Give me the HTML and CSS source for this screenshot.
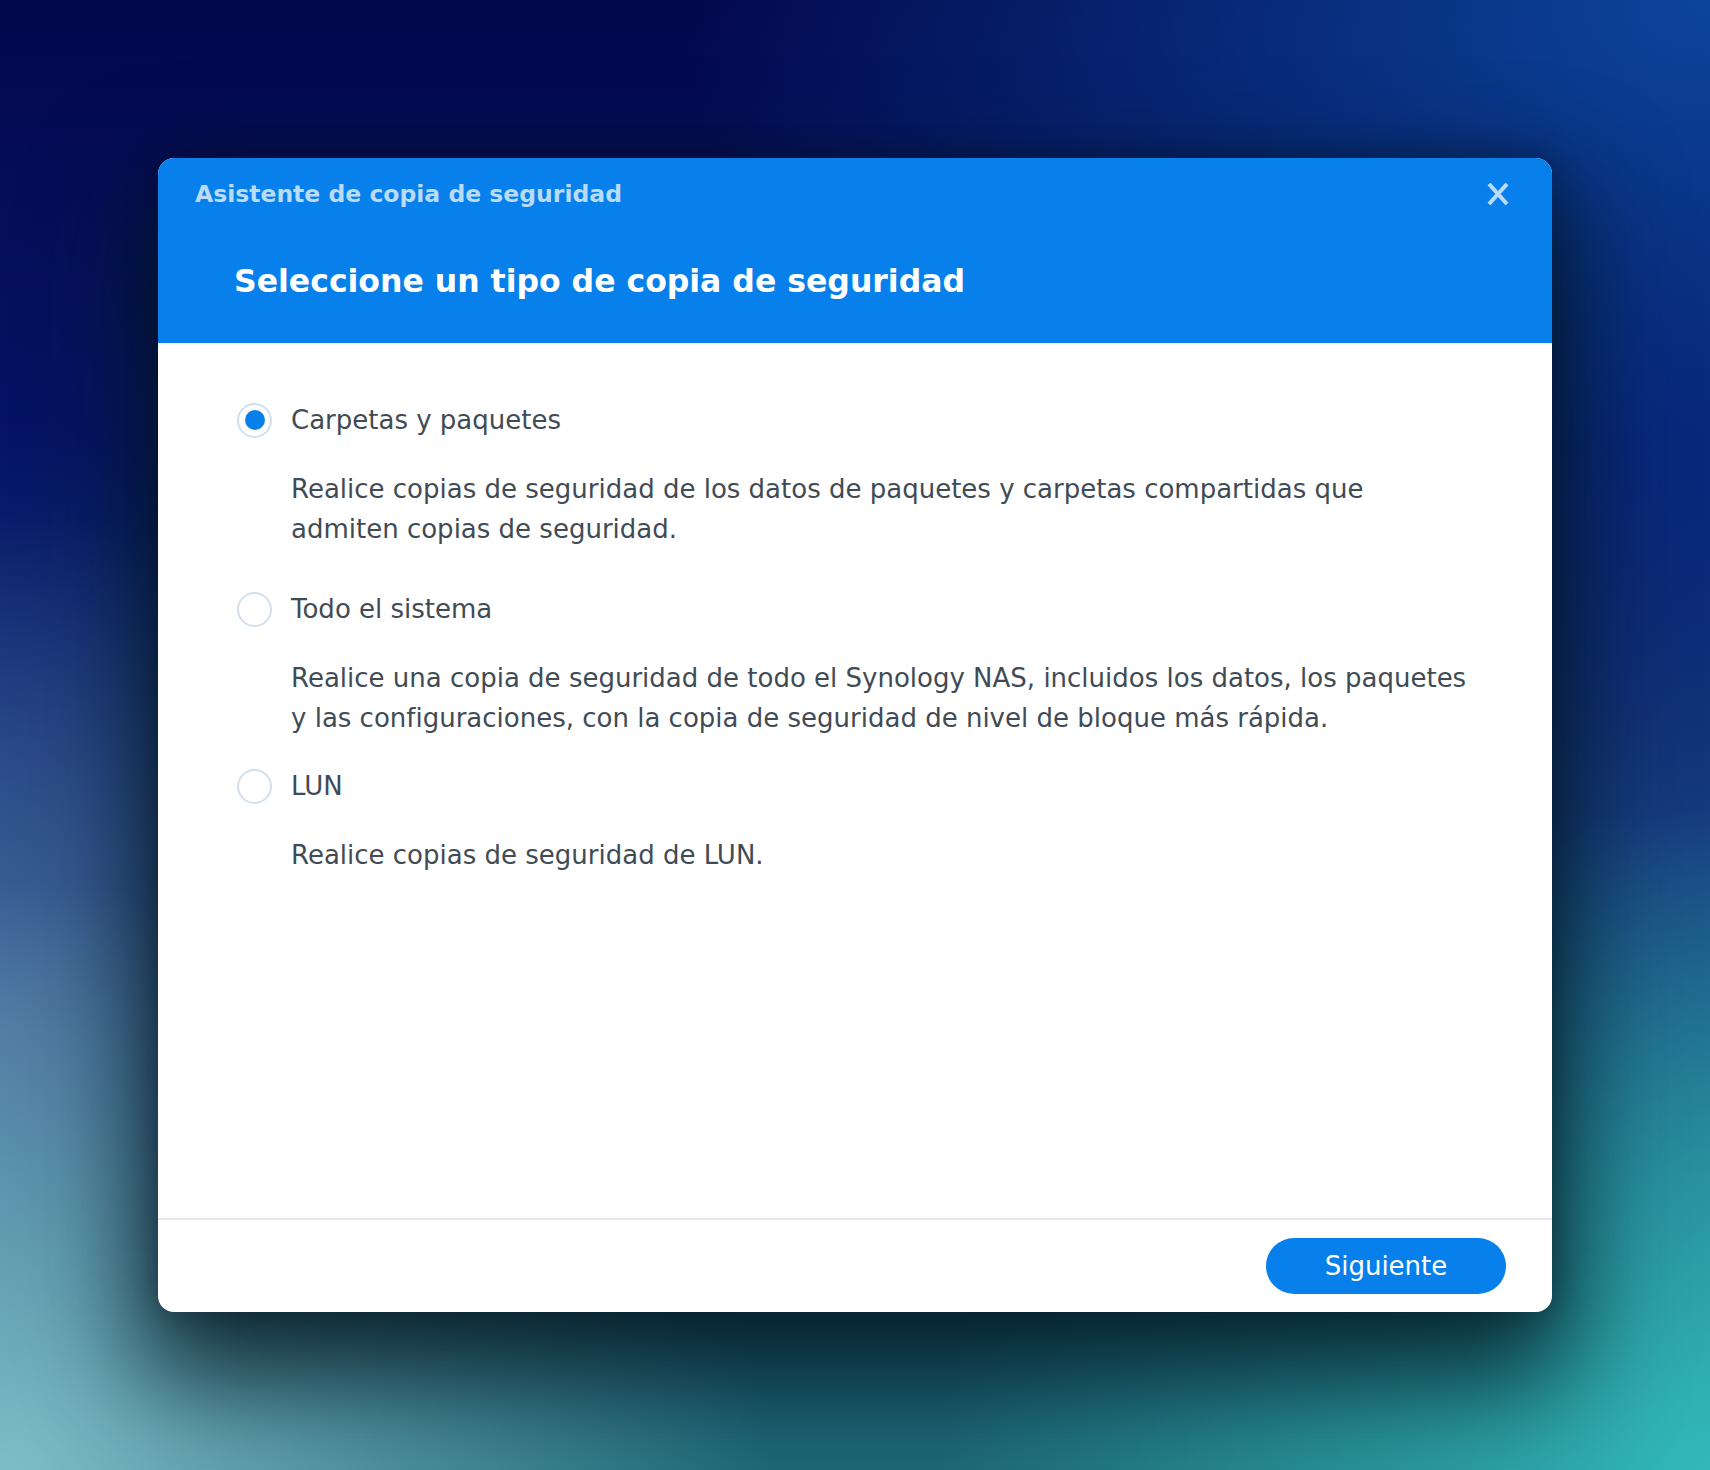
FILE: index.html
```html
<!DOCTYPE html>
<html lang="es">
<head>
  <meta charset="UTF-8" />
  <meta name="viewport" content="width=device-width, initial-scale=1.0"/>
  <title>Asistente de copia de seguridad</title>
  <link rel="stylesheet" href="styles.css">
</head>
<body>
  <div class="dialog">
    <!-- Header with wizard name and step title -->
    <div class="dialog-header">
      <div class="header-top">
        <span class="wizard-name">Asistente de copia de seguridad</span>
        <button class="close-btn" aria-label="Cerrar">
          <svg width="22" height="22" viewBox="0 0 22 22">
            <path d="M2 1 L20 21 M20 1 L2 21" stroke="currentColor" stroke-width="4" fill="none"/>
          </svg>
        </button>
      </div>
      <h1 class="step-title">Seleccione un tipo de copia de seguridad</h1>
    </div>

    <!-- Backup type options -->
    <div class="dialog-body">
      <div class="option option-first">
        <div class="option-row">
          <span class="radio checked"></span>
          <span class="option-label">Carpetas y paquetes</span>
        </div>
        <p class="option-desc">Realice copias de seguridad de los datos de paquetes y carpetas compartidas que admiten copias de seguridad.</p>
      </div>

      <div class="option">
        <div class="option-row">
          <span class="radio"></span>
          <span class="option-label">Todo el sistema</span>
        </div>
        <p class="option-desc">Realice una copia de seguridad de todo el Synology NAS, incluidos los datos, los paquetes y las configuraciones, con la copia de seguridad de nivel de bloque más rápida.</p>
      </div>

      <div class="option">
        <div class="option-row">
          <span class="radio"></span>
          <span class="option-label">LUN</span>
        </div>
        <p class="option-desc">Realice copias de seguridad de LUN.</p>
      </div>
    </div>

    <div class="dialog-footer">
      <button class="next-btn">Siguiente</button>
    </div>
  </div>
</body>
</html>
```

FILE: styles.css
```css
html, body {
  height: 100%;
}

body {
  margin: 0;
  font-family: 'DejaVu Sans', Verdana, sans-serif;
  color: #414b55;
  display: flex;
  align-items: center;
  justify-content: center;
  background:
    radial-gradient(ellipse 45% 40% at 0% 100%, rgba(125, 190, 200, 1) 0%, rgba(125, 190, 200, 0) 100%),
    radial-gradient(ellipse 45% 45% at 100% 100%, rgba(50, 185, 185, 1) 0%, rgba(50, 185, 185, 0) 100%),
    radial-gradient(ellipse 60% 50% at 100% 0%, rgba(12, 72, 160, 0.95) 0%, rgba(12, 72, 160, 0) 100%),
    radial-gradient(ellipse 40% 35% at 0% 70%, rgba(80, 110, 160, 0.8) 0%, rgba(80, 110, 160, 0) 100%),
    linear-gradient(to bottom, #03084c 0%, #061466 30%, #173f80 58%, #1d5f80 80%, #1f6a78 100%);
}

.dialog {
  width: 1394px;
  height: 1154px;
  background-color: #fff;
  border-radius: 16px;
  overflow: hidden;
  display: flex;
  flex-direction: column;
  box-shadow: 0 50px 110px 20px rgba(2, 22, 32, 0.85), 0 0 30px rgba(0, 10, 30, 0.35);
}

/* Header */
.dialog-header {
  background-color: #0780eb;
  padding: 21px 40px 42px 37px;
}

.header-top {
  display: flex;
  justify-content: space-between;
  align-items: center;
}

.wizard-name {
  font-size: 23.5px;
  font-weight: bold;
  line-height: 30px;
  color: #badbf9;
}

.close-btn {
  background: none;
  border: none;
  padding: 0;
  margin-right: 3px;
  color: #badbf9;
  display: flex;
  cursor: pointer;
}

.step-title {
  margin: 52px 0 0 39px;
  font-size: 31.5px;
  line-height: 40px;
  font-weight: bold;
  color: #fff;
}

/* Body */
.dialog-body {
  flex: 1;
  padding: 59px 80px 0 79px;
}

.option {
  margin-bottom: 30px;
}

.option-first {
  margin-bottom: 42px;
}

.option-row {
  display: flex;
  align-items: center;
  gap: 19px;
}

.radio {
  box-sizing: border-box;
  width: 35px;
  height: 35px;
  border: 2px solid #d3dfec;
  border-radius: 50%;
  display: flex;
  align-items: center;
  justify-content: center;
}

.radio.checked::after {
  content: '';
  width: 20px;
  height: 20px;
  border-radius: 50%;
  background-color: #0780eb;
}

.option-label {
  font-size: 26px;
  line-height: 36px;
}

.option-desc {
  margin: 32px 0 0 54px;
  font-size: 26px;
  line-height: 39.5px;
}

/* Footer */
.dialog-footer {
  border-top: 2px solid #e4e9f0;
  padding: 18px 46px 18px 0;
  display: flex;
  justify-content: flex-end;
}

.next-btn {
  width: 240px;
  height: 56px;
  border: none;
  border-radius: 28px;
  background-color: #0780eb;
  color: #fff;
  font-family: 'DejaVu Sans', Verdana, sans-serif;
  font-size: 26px;
  cursor: pointer;
}
```
